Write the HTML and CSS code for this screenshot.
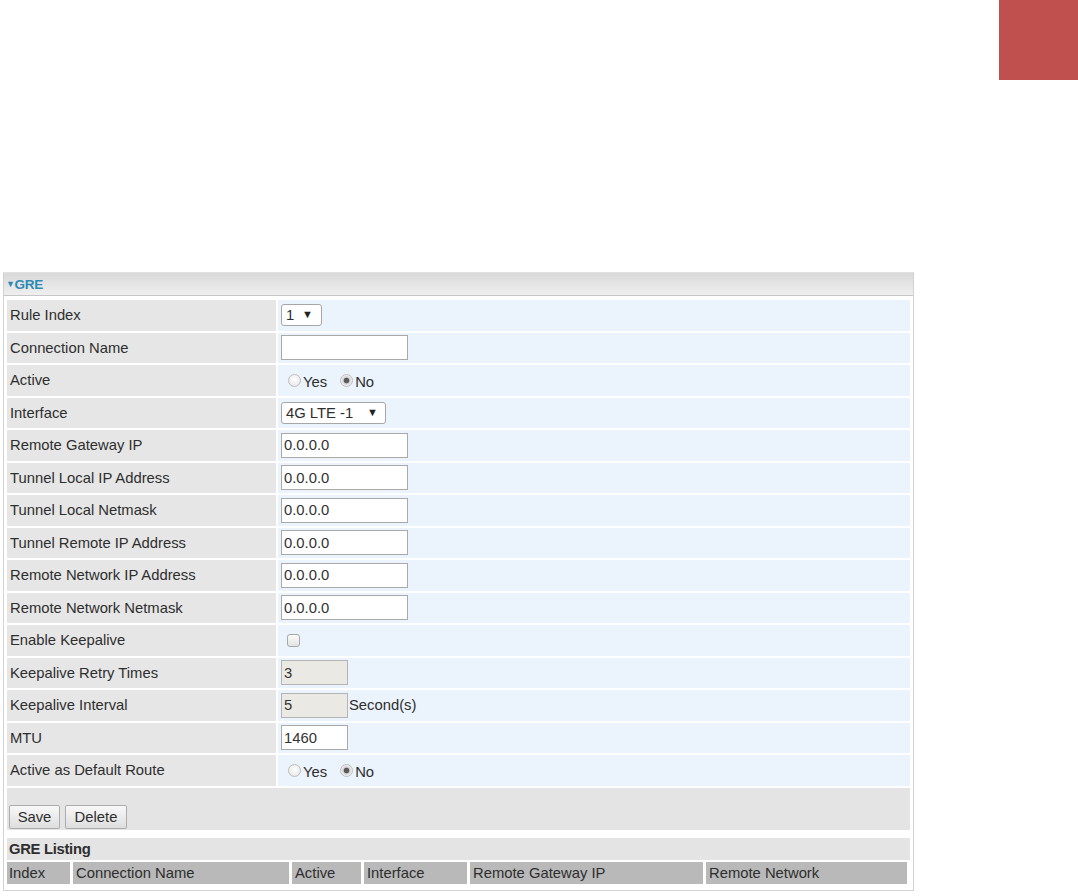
FILE: index.html
```html
<!DOCTYPE html>
<html>
<head>
<meta charset="utf-8">
<title>GRE</title>
<link rel="stylesheet" href="styles.css">
</head>
<body>
<div class="top"><div class="tab"></div></div>
<div class="panel">
  <div class="panel-head"><span class="caret">&#9660;</span>GRE</div>
  <div class="form">
    <div class="row"><div class="lbl">Rule Index</div><div class="val"><span class="sel sel-idx"><select><option>1</option></select></span></div></div>
    <div class="row"><div class="lbl">Connection Name</div><div class="val"><input class="txt" type="text" value=""></div></div>
    <div class="row"><div class="lbl">Active</div><div class="val"><input class="radio" type="radio" name="a1"><span class="rlabel">Yes</span><input class="radio" type="radio" name="a1" checked><span class="rlabel">No</span></div></div>
    <div class="row"><div class="lbl">Interface</div><div class="val"><span class="sel sel-if"><select><option>4G LTE -1</option></select></span></div></div>
    <div class="row"><div class="lbl">Remote Gateway IP</div><div class="val"><input class="txt" type="text" value="0.0.0.0"></div></div>
    <div class="row"><div class="lbl">Tunnel Local IP Address</div><div class="val"><input class="txt" type="text" value="0.0.0.0"></div></div>
    <div class="row"><div class="lbl">Tunnel Local Netmask</div><div class="val"><input class="txt" type="text" value="0.0.0.0"></div></div>
    <div class="row"><div class="lbl">Tunnel Remote IP Address</div><div class="val"><input class="txt" type="text" value="0.0.0.0"></div></div>
    <div class="row"><div class="lbl">Remote Network IP Address</div><div class="val"><input class="txt" type="text" value="0.0.0.0"></div></div>
    <div class="row"><div class="lbl">Remote Network Netmask</div><div class="val"><input class="txt" type="text" value="0.0.0.0"></div></div>
    <div class="row"><div class="lbl">Enable Keepalive</div><div class="val"><input class="check" type="checkbox"></div></div>
    <div class="row"><div class="lbl">Keepalive Retry Times</div><div class="val"><input class="txt short" type="text" value="3" disabled></div></div>
    <div class="row"><div class="lbl">Keepalive Interval</div><div class="val"><input class="txt short" type="text" value="5" disabled><span class="unit">Second(s)</span></div></div>
    <div class="row"><div class="lbl">MTU</div><div class="val"><input class="txt short" type="text" value="1460"></div></div>
    <div class="row"><div class="lbl">Active as Default Route</div><div class="val"><input class="radio" type="radio" name="a2"><span class="rlabel">Yes</span><input class="radio" type="radio" name="a2" checked><span class="rlabel">No</span></div></div>
  </div>
  <div class="actions"><button class="btn btn-save">Save</button><button class="btn btn-del">Delete</button></div>
  <div class="listing">
    <div class="listing-title">GRE Listing</div>
    <div class="listing-head">
      <div class="c-idx">Index</div>
      <div class="c-name">Connection Name</div>
      <div class="c-act">Active</div>
      <div class="c-if">Interface</div>
      <div class="c-gw">Remote Gateway IP</div>
      <div class="c-net">Remote Network</div>
    </div>
  </div>
</div>
</body>
</html>
```
FILE: styles.css
```css
body {
  margin: 0;
  background: #fff;
  font-family: "Liberation Sans", Arial, sans-serif;
  font-size: 14.8px;
  color: #2e2e2e;
}
.top {
  display: flex;
  justify-content: flex-end;
  height: 272px;
}
.tab {
  width: 79px;
  height: 80px;
  background: #c0504d;
}
.panel {
  margin-left: 3px;
  width: 909px;
  border: 1px solid #d2d2d2;
  border-top-color: #e2e2e2;
  padding-bottom: 6px;
}
.panel-head {
  height: 22px;
  line-height: 23px;
  background: linear-gradient(#d9d9d9, #efefef);
  border-bottom: 1px solid #c6c6c6;
  color: #2d8ab6;
  font-weight: bold;
  font-size: 13.5px;
  padding-left: 2px;
  letter-spacing: -0.3px;
}
.caret {
  font-size: 9px;
  vertical-align: 2px;
  margin-right: 0;
}
.form {
  padding: 4px 3px 0 3px;
}
.row {
  display: flex;
  gap: 2px;
  height: 30.5px;
  margin-bottom: 2px;
}
.lbl {
  width: 266px;
  padding-left: 3px;
  background: #e6e6e6;
  display: flex;
  align-items: center;
}
.val {
  flex: 1;
  padding-left: 3px;
  background: #ebf3fc;
  display: flex;
  align-items: center;
}
.txt {
  box-sizing: border-box;
  width: 127px;
  height: 25px;
  margin: 0;
  padding: 0 2px;
  border: 1px solid #a9a9a9;
  background: #fff;
  font-family: inherit;
  font-size: 14.8px;
  color: #333;
}
.txt.short {
  width: 67px;
}
.txt:disabled {
  background: #ebe9e4;
  border-color: #b4b4b4;
  color: #333;
}
.unit {
  margin-left: 1px;
}
.sel {
  position: relative;
  display: inline-block;
}
.sel select {
  appearance: none;
  -webkit-appearance: none;
  box-sizing: border-box;
  height: 22px;
  margin: 0;
  padding: 0 0 0 4px;
  border: 1px solid #a6a6a6;
  border-radius: 3px;
  background: #fff;
  font-family: inherit;
  font-size: 14.8px;
  color: #2e2e2e;
}
.sel-idx select { width: 41px; }
.sel-if select { width: 105px; }
.sel::after {
  content: "\25BC";
  position: absolute;
  top: 4px;
  font-size: 11px;
  color: #222;
  pointer-events: none;
}
.sel-idx::after { right: 9px; }
.sel-if::after { right: 8px; }
.radio {
  appearance: none;
  -webkit-appearance: none;
  width: 13px;
  height: 13px;
  margin: 0 2px 0 7px;
  border: 1px solid #bdbdbd;
  border-radius: 50%;
  background: radial-gradient(circle at 50% 40%, #ffffff, #e2e2e2);
}
.radio:checked {
  background: radial-gradient(circle, #5a5a5a 0 2.4px, #cfcfcf 3.2px, #f4f4f4 5.5px);
}
.rlabel {
  margin-right: 6px;
  margin-top: 3px;
}
.check {
  appearance: none;
  -webkit-appearance: none;
  width: 13px;
  height: 13px;
  margin: 0 0 0 6px;
  border: 1px solid #a8a8a8;
  border-radius: 3px;
  background: linear-gradient(#fbfbfb, #e3e3e3);
}
.actions {
  margin: 0 3px;
  height: 42.5px;
  box-sizing: border-box;
  background: #e4e4e4;
  display: flex;
  align-items: flex-end;
  gap: 5px;
  padding: 0 2px 1px;
}
.btn {
  height: 24px;
  margin: 0;
  padding: 0;
  border: 1px solid #acacac;
  border-radius: 2px;
  background: linear-gradient(#f8f8f8, #dedede);
  font-family: inherit;
  font-size: 14.8px;
  color: #2e2e2e;
}
.btn-save { width: 51px; }
.btn-del { width: 62px; }
.listing {
  margin: 8px 3px 0;
}
.listing-title {
  height: 22px;
  line-height: 22px;
  background: #e4e4e4;
  font-weight: bold;
  padding-left: 2px;
  letter-spacing: -0.3px;
}
.listing-head {
  display: flex;
  gap: 3px;
  margin-top: 2px;
  margin-right: 2px;
}
.listing-head div {
  height: 22px;
  line-height: 22px;
  background: #b9b9b9;
  padding-left: 3px;
  box-sizing: border-box;
}
.c-idx { width: 63px; padding-left: 2px !important; }
.c-name { width: 216px; }
.c-act { width: 69px; }
.c-if { width: 103px; }
.c-gw { width: 233px; }
.c-net { width: 201px; }
```
